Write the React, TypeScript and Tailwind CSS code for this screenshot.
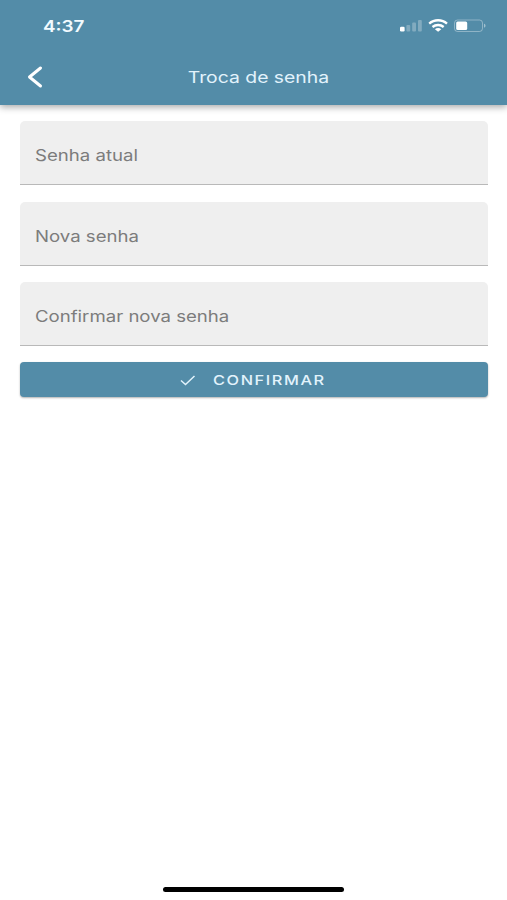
import React from 'react';

const fields = ['Senha atual', 'Nova senha', 'Confirmar nova senha'];

function StatusBar() {
  return (
    <div className="flex h-[50px] items-center justify-between pl-[42.5px] pr-[20px]">
      <span className="inline-block origin-left scale-x-[1.18] pt-[1px] text-[16px] font-semibold leading-5 text-[#f2fbff]">4:37</span>
      <svg width="88" height="16" viewBox="0 0 88 16" fill="none">
        <rect x="1" y="9.7" width="4.6" height="4.8" rx="1.2" fill="#fff" />
        <g fill="#fff" opacity="0.27">
          <rect x="7.4" y="8" width="3.8" height="6.5" rx="1" />
          <rect x="13.2" y="5.5" width="3.8" height="9" rx="1" />
          <rect x="19" y="3" width="3.8" height="11.5" rx="1" />
        </g>
        <g stroke="#fff" strokeWidth="2.3">
          <path d="M30.2 6.7c5-4.6 12.8-4.6 17.8 0" />
          <path d="M33.5 10c3.2-2.7 8-2.7 11.2 0" />
        </g>
        <path d="M35.9 12.2c1.8-1.5 4.6-1.5 6.4 0l-3.2 2.6z" fill="#fff" />
        <rect x="55.5" y="3" width="28" height="11.5" rx="3" stroke="#fff" strokeOpacity="0.35" />
        <rect x="57.2" y="4.5" width="11" height="8.5" rx="1.5" fill="#fff" />
        <path d="M85 6.8c2 .5 2 3.4 0 3.9z" fill="#fff" opacity="0.45" />
      </svg>
    </div>
  );
}

function Header() {
  return (
    <header className="h-[105px] bg-[#538ca8] text-white shadow-[0_2px_7px_rgba(0,0,0,0.35)]">
      <StatusBar />
      <div className="grid h-[54px] grid-cols-[60px_1fr_50px] items-center">
        <button className="pl-[26px]" aria-label="Voltar">
          <svg width="18" height="24" viewBox="0 0 18 24" fill="none">
            <path d="M14.5 3 3.5 12 14.5 21" stroke="#fff" strokeWidth="3" strokeLinecap="round" strokeLinejoin="round" />
          </svg>
        </button>
        <h1 className="text-center text-[16px] leading-5 text-[#e2f3fc]">
          <span className="inline-block scale-x-[1.21]">Troca de senha</span>
        </h1>
      </div>
    </header>
  );
}

export default function App() {
  return (
    <div className="flex h-[900px] w-[507px] flex-col bg-white font-['Inter',sans-serif]">
      <Header />
      <main className="flex flex-1 flex-col gap-[16.3px] pl-5 pr-[19px] pt-[16.4px]">
        {fields.map((label) => (
          <label
            key={label}
            className="flex h-16 items-center rounded-t-[5px] border-b border-[#b9b9b9] bg-[#efefef] px-[15px] pt-[6px] text-[15.5px] text-[#7c7c7c]"
          >
            <span className="inline-block origin-left scale-x-[1.2]">{label}</span>
          </label>
        ))}
        <button className="flex h-[35px] items-center justify-center gap-[17px] rounded-[4px] bg-[#538ca8] pr-[22.5px] text-[13.5px] font-medium text-[#e2f3fc] shadow-[0_1px_2px_rgba(0,0,0,0.3)]">
          <svg width="16" height="12" viewBox="0 0 16 12" fill="none">
            <path d="m1 6.5 4.5 4L14.5 2" stroke="currentColor" strokeWidth="1.5" />
          </svg>
          <span className="inline-block origin-left scale-x-[1.21] tracking-[1.3px]">CONFIRMAR</span>
        </button>
      </main>
      <div className="flex justify-center pb-[8px]">
        <div className="h-[5px] w-[181px] rounded-full bg-black" />
      </div>
    </div>
  );
}
